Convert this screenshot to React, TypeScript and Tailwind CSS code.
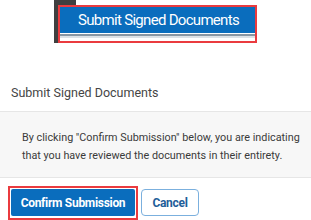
import React from 'react';

const App: React.FC = () => {
  return (
    <div className="w-[311px] h-[220px] overflow-hidden bg-white font-['Roboto',sans-serif]">
      {/* top: highlighted trigger button */}
      <div className="ml-[54px] w-[203px] h-[43px] pt-[5px] pl-[4px] bg-[linear-gradient(to_right,#3f3f3f_22px,#ffffff_22px)]">
        <div className="w-[199px] h-[38px] border-2 border-[#ea3b3f] bg-white flex flex-col">
          <div className="h-[26px] bg-[#0a6dbd] text-white text-[15px] tracking-[-0.7px] leading-[26px] text-center pl-[2px] whitespace-nowrap">
            Submit Signed Documents
          </div>
          <div className="h-[1px] bg-white" />
          <div className="h-[2px] bg-[#8896a3]" />
          <div className="h-[2px] bg-[#dde2e6]" />
        </div>
      </div>

      {/* dialog header */}
      <div className="h-[69px] flex items-center pl-[11px] pt-[32px] border-b border-[#e6e6e6]">
        <span className="text-[12.5px] text-[#454545]">Submit Signed Documents</span>
      </div>

      {/* dialog body */}
      <div className="h-[66px] bg-[#f7f7f7] border-b border-[#e6e6e6] pl-[22px] pt-[17px]">
        <p className="text-[10.8px] leading-[18px] text-[#3a3a3a]">
          By clicking "Confirm Submission" below, you are indicating
          <br />
          that you have reviewed the documents in their entirety.
        </p>
      </div>

      {/* actions */}
      <div className="flex items-start gap-[3px] pl-[8px] pt-[8px]">
        <div className="border-2 border-[#ea3b3f] p-[1px] w-[130px] h-[34px]">
          <button className="w-full h-[27px] bg-[#0a6dbd] rounded-[2px] text-white text-[12px] tracking-[-0.3px] font-bold">
            Confirm Submission
          </button>
        </div>
        <button className="mt-[3px] w-[58px] h-[27px] border border-[#7bb0de] rounded-[4px] bg-white text-[#1f5e99] text-[12px] tracking-[-0.3px] font-bold">
          Cancel
        </button>
      </div>
    </div>
  );
};

export default App;
